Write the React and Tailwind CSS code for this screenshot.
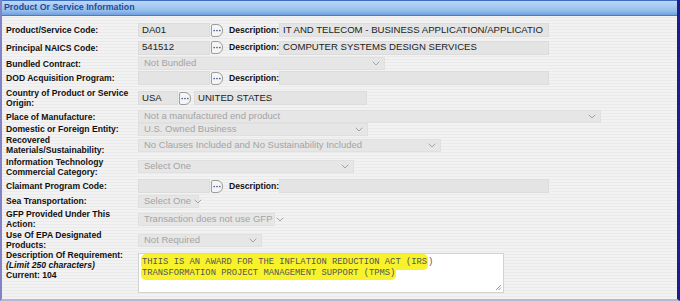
const font = "font-['Liberation_Sans',Arial,sans-serif]";

function Label({ children }) {
  return (
    <div className="w-[136px] shrink-0 pl-[4px] pr-[4px] text-[8.6px] leading-[10px] font-bold text-[#111]">
      {children}
    </div>
  );
}

function TextBox({ className, value }) {
  return (
    <div className={`h-[14px] shrink-0 bg-[#e4e4e4] border border-[#dcdcdc] pl-[3px] flex items-center text-[9.6px] text-[#222] whitespace-nowrap overflow-hidden ${className}`}>
      {value}
    </div>
  );
}

function Dots() {
  return (
    <div className="w-[12px] h-[13px] shrink-0 ml-[1px] border border-[#9c9c9c] rounded-l-[2px] rounded-r-[6px] bg-[#f5f5f5] flex items-center justify-center">
      <svg width="8" height="3" viewBox="0 0 8 3">
        <circle cx="1.2" cy="1.5" r="0.85" fill="#4a5a8e" />
        <circle cx="4" cy="1.5" r="0.85" fill="#4a5a8e" />
        <circle cx="6.8" cy="1.5" r="0.85" fill="#4a5a8e" />
      </svg>
    </div>
  );
}

function Chevron() {
  return (
    <svg width="8" height="5" viewBox="0 0 8 5" className="shrink-0">
      <path d="M0.7 0.7 L4 4 L7.3 0.7" fill="none" stroke="#a2a2a2" strokeWidth="1" />
    </svg>
  );
}

function Select({ className, value, tight }) {
  return (
    <div className={`h-[13px] shrink-0 bg-[#e6e6e6] border border-[#e0e0e0] pl-[5px] pr-[4px] flex items-center text-[9.5px] text-[#a4a4a4] whitespace-nowrap ${tight ? 'gap-[3px]' : 'justify-between'} ${className}`}>
      <span>{value}</span>
      <Chevron />
    </div>
  );
}

function Desc() {
  return <div className="w-[50px] shrink-0 ml-[6px] whitespace-nowrap text-[8.6px] font-bold text-[#111]">Description:</div>;
}

export default function App() {
  return (
    <div className={`w-[680px] h-[301px] flex flex-col overflow-hidden border-l-2 border-l-[#8282c6] border-r-[3px] border-r-[#1c1c94] border-b-2 border-b-[#b4b9d2] bg-[repeating-linear-gradient(180deg,#f2f2f2_0px,#f2f2f2_2px,#eaeaea_2px,#eaeaea_3px)] ${font}`}>
      <div className="h-[16px] shrink-0 border-t border-t-[#3d6fbe] border-b border-b-[#4a7cc4] bg-[linear-gradient(to_bottom,#bcd6f6,#a3c7f1_45%,#93bdee_70%,#6f9fdc)] flex items-center pl-[2px] text-[8.8px] font-bold text-[#1f4c95]">
        Product Or Service Information
      </div>

      <div className="h-[5px] shrink-0" />

      <div className="h-[18px] shrink-0 flex items-center">
        <Label>Product/Service Code:</Label>
        <TextBox className="w-[72px]" value="DA01" />
        <Dots />
        <Desc />
        <TextBox className="w-[270px]" value="IT AND TELECOM - BUSINESS APPLICATION/APPLICATIO" />
      </div>

      <div className="h-[17px] shrink-0 flex items-center">
        <Label>Principal NAICS Code:</Label>
        <TextBox className="w-[72px]" value="541512" />
        <Dots />
        <Desc />
        <TextBox className="w-[270px]" value="COMPUTER SYSTEMS DESIGN SERVICES" />
      </div>

      <div className="h-[15px] shrink-0 flex items-center">
        <Label>Bundled Contract:</Label>
        <Select className="w-[247px]" value="Not Bundled" />
      </div>

      <div className="h-[14px] shrink-0 flex items-center">
        <Label>DOD Acquisition Program:</Label>
        <TextBox className="w-[72px]" value="" />
        <Dots />
        <Desc />
        <TextBox className="w-[270px]" value="" />
      </div>

      <div className="h-[26px] shrink-0 flex items-center">
        <Label>Country of Product or Service Origin:</Label>
        <TextBox className="w-[40px]" value="USA" />
        <Dots />
        <TextBox className="w-[173px] ml-[3px]" value="UNITED STATES" />
      </div>

      <div className="h-[11px] shrink-0 flex items-center">
        <Label>Place of Manufacture:</Label>
        <Select className="w-[463px]" value="Not a manufactured end product" />
      </div>

      <div className="h-[14px] shrink-0 flex items-center">
        <Label>Domestic or Foreign Entity:</Label>
        <Select className="w-[230px]" value="U.S. Owned Business" />
      </div>

      <div className="h-[18px] shrink-0 flex items-center">
        <Label>Recovered Materials/Sustainability:</Label>
        <Select className="w-[303px]" value="No Clauses Included and No Sustainability Included" />
      </div>

      <div className="h-[25px] shrink-0 flex items-center">
        <Label>Information Technology Commercial Category:</Label>
        <Select className="w-[216px]" value="Select One" />
      </div>

      <div className="h-[14px] shrink-0 flex items-center">
        <Label>Claimant Program Code:</Label>
        <TextBox className="w-[72px]" value="" />
        <Dots />
        <Desc />
        <TextBox className="w-[270px]" value="" />
      </div>

      <div className="h-[16px] shrink-0 flex items-center">
        <Label>Sea Transportation:</Label>
        <Select className="w-[61px]" value="Select One" tight />
      </div>

      <div className="h-[20px] shrink-0 flex items-center">
        <Label>GFP Provided Under This Action:</Label>
        <Select className="w-[137px]" value="Transaction does not use GFP" tight />
      </div>

      <div className="h-[22px] shrink-0 flex items-center">
        <Label>Use Of EPA Designated Products:</Label>
        <Select className="w-[124px]" value="Not Required" />
      </div>

      <div className="flex items-start">
        <div className="-mt-[1px]">
          <Label>
            Description Of Requirement:
            <br />
            <span className="italic">(Limit 250 characters)</span>
            <br />
            Current: 104
          </Label>
        </div>
        <div className="relative mt-[2px] w-[366px] h-[40px] bg-white border border-[#d2d2d2] pl-[2px] pt-[3px] font-['Liberation_Mono','Courier_New',monospace] text-[8.8px] leading-[11px] text-[#555] whitespace-pre">
          <div>
            <span className="bg-[#f8f22c] rounded-[5px] px-[1px] py-[3px]">THIIS IS AN AWARD FOR THE INFLATION REDUCTION ACT (IRS</span>)
          </div>
          <div>
            <span className="bg-[#f8f22c] rounded-[5px] px-[1px] py-[2px]">TRANSFORMATION PROJECT MANAGEMENT SUPPORT (TPMS)</span>
          </div>
          <svg width="7" height="7" viewBox="0 0 7 7" className="absolute right-[1px] bottom-[1px]">
            <path d="M6 1 L1 6 M6 3.5 L3.5 6" stroke="#8a8a8a" strokeWidth="0.9" />
          </svg>
        </div>
      </div>
    </div>
  );
}
